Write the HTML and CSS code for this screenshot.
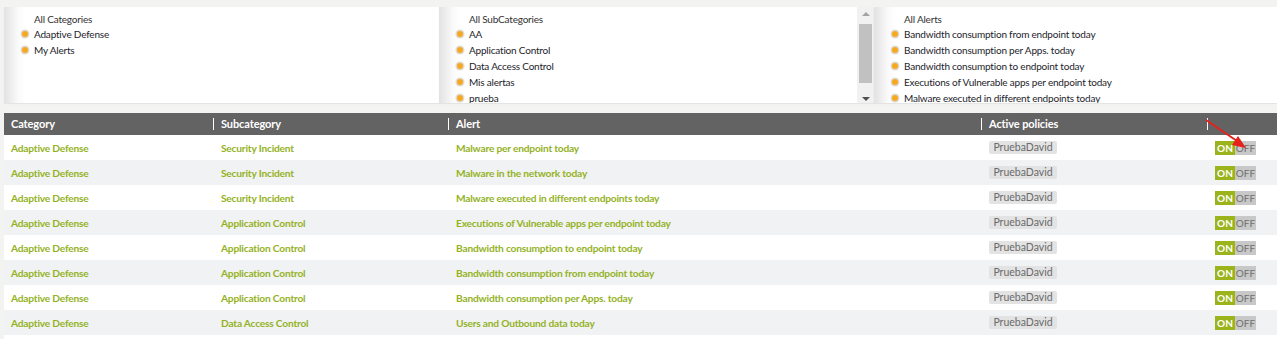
FILE: index.html
```html
<!DOCTYPE html>
<html lang="en">
<head>
    <meta charset="UTF-8">
    <link rel="stylesheet" href="styles.css">
    <title>Alerts</title>
</head>
<body>
    <div class="page">
        <div class="filters">
            <div class="filter">
                <div class="filter-list">
                    <div class="filter-head">All Categories</div>
                    <div class="filter-item"><span class="dot"></span>Adaptive Defense</div>
                    <div class="filter-item"><span class="dot"></span>My Alerts</div>
                </div>
            </div>
            <div class="filter">
                <div class="filter-list">
                    <div class="filter-head">All SubCategories</div>
                    <div class="filter-item"><span class="dot"></span>AA</div>
                    <div class="filter-item"><span class="dot"></span>Application Control</div>
                    <div class="filter-item"><span class="dot"></span>Data Access Control</div>
                    <div class="filter-item"><span class="dot"></span>Mis alertas</div>
                    <div class="filter-item"><span class="dot"></span>prueba</div>
                </div>
                <div class="scrollbar">
                    <span class="sb-up"></span>
                    <span class="sb-thumb"></span>
                    <span class="sb-down"></span>
                </div>
            </div>
            <div class="filter">
                <div class="filter-list">
                    <div class="filter-head">All Alerts</div>
                    <div class="filter-item"><span class="dot"></span>Bandwidth consumption from endpoint today</div>
                    <div class="filter-item"><span class="dot"></span>Bandwidth consumption per Apps. today</div>
                    <div class="filter-item"><span class="dot"></span>Bandwidth consumption to endpoint today</div>
                    <div class="filter-item"><span class="dot"></span>Executions of Vulnerable apps per endpoint today</div>
                    <div class="filter-item"><span class="dot"></span>Malware executed in different endpoints today</div>
                </div>
            </div>
        </div>

        <div class="table-wrap">
            <table class="alerts">
                <colgroup>
                    <col style="width: 209px">
                    <col style="width: 235px">
                    <col style="width: 533px">
                    <col style="width: 226px">
                    <col>
                </colgroup>
                <thead>
                    <tr>
                        <th><span class="first">Category</span></th>
                        <th><span>Subcategory</span></th>
                        <th><span>Alert</span></th>
                        <th><span>Active policies</span></th>
                        <th><span>&nbsp;</span></th>
                    </tr>
                </thead>
                <tbody>
                    <tr>
                        <td>Adaptive Defense</td><td>Security Incident</td><td>Malware per endpoint today</td>
                        <td><span class="policy">PruebaDavid</span></td>
                        <td><span class="toggle"><span class="on">ON</span><span class="off">OFF</span></span></td>
                    </tr>
                    <tr>
                        <td>Adaptive Defense</td><td>Security Incident</td><td>Malware in the network today</td>
                        <td><span class="policy">PruebaDavid</span></td>
                        <td><span class="toggle"><span class="on">ON</span><span class="off">OFF</span></span></td>
                    </tr>
                    <tr>
                        <td>Adaptive Defense</td><td>Security Incident</td><td>Malware executed in different endpoints today</td>
                        <td><span class="policy">PruebaDavid</span></td>
                        <td><span class="toggle"><span class="on">ON</span><span class="off">OFF</span></span></td>
                    </tr>
                    <tr>
                        <td>Adaptive Defense</td><td>Application Control</td><td>Executions of Vulnerable apps per endpoint today</td>
                        <td><span class="policy">PruebaDavid</span></td>
                        <td><span class="toggle"><span class="on">ON</span><span class="off">OFF</span></span></td>
                    </tr>
                    <tr>
                        <td>Adaptive Defense</td><td>Application Control</td><td>Bandwidth consumption to endpoint today</td>
                        <td><span class="policy">PruebaDavid</span></td>
                        <td><span class="toggle"><span class="on">ON</span><span class="off">OFF</span></span></td>
                    </tr>
                    <tr>
                        <td>Adaptive Defense</td><td>Application Control</td><td>Bandwidth consumption from endpoint today</td>
                        <td><span class="policy">PruebaDavid</span></td>
                        <td><span class="toggle"><span class="on">ON</span><span class="off">OFF</span></span></td>
                    </tr>
                    <tr>
                        <td>Adaptive Defense</td><td>Application Control</td><td>Bandwidth consumption per Apps. today</td>
                        <td><span class="policy">PruebaDavid</span></td>
                        <td><span class="toggle"><span class="on">ON</span><span class="off">OFF</span></span></td>
                    </tr>
                    <tr>
                        <td>Adaptive Defense</td><td>Data Access Control</td><td>Users and Outbound data today</td>
                        <td><span class="policy">PruebaDavid</span></td>
                        <td><span class="toggle"><span class="on">ON</span><span class="off">OFF</span></span></td>
                    </tr>
                    <tr>
                        <td>&nbsp;</td><td></td><td></td><td></td><td></td>
                    </tr>
                </tbody>
            </table>

            <svg class="pointer" width="50" height="36" viewBox="0 0 50 36">
                <line x1="4" y1="2" x2="35" y2="23" stroke="#e8201c" stroke-width="2"/>
                <polygon points="44,30 30,27 36,18" fill="#e8201c"/>
            </svg>
        </div>
    </div>
</body>
</html>
```

FILE: styles.css
```css
body {
    margin: 0;
    background: #f3f3f2;
    font-family: Lato, "Open Sans", sans-serif;
    overflow: hidden;
}

.page {
    padding: 7px 0 0 4px;
}

.filters {
    display: grid;
    grid-template-columns: 435px 435px 1fr;
    height: 96px;
}

.filter {
    display: flex;
    overflow: hidden;
    background: linear-gradient(to right, #e2e2e2, #fafafa 14px, #fff 22px);
    box-shadow: 0 1px 1px rgba(0, 0, 0, 0.06);
}

.filter-list {
    flex: 1;
    padding-top: 5px;
    font-size: 10px;
    letter-spacing: -0.2px;
    color: #1d1d2b;
}

.filter-head {
    padding-left: 30px;
    line-height: 14px;
    color: #333;
}

.filter-item {
    display: flex;
    align-items: center;
    height: 16px;
    padding-left: 18px;
}

.dot {
    flex: none;
    width: 6px;
    height: 6px;
    margin-right: 6px;
    border-radius: 50%;
    background: #f7a823;
    box-shadow: 0 0 0 1.5px #dedad2;
}

.scrollbar {
    width: 17px;
    display: flex;
    flex-direction: column;
    align-items: center;
    background: #f1f1f1;
}

.sb-up,
.sb-down {
    width: 0;
    height: 0;
    border-left: 4px solid transparent;
    border-right: 4px solid transparent;
}

.sb-up {
    margin-top: 5px;
    border-bottom: 4px solid #a3a3a3;
}

.sb-thumb {
    width: 13px;
    height: 59px;
    margin: 8px 0 14px;
    background: #c1c1c1;
}

.sb-down {
    border-top: 4px solid #505050;
}

.table-wrap {
    position: relative;
    margin-top: 10px;
}

.alerts {
    width: 100%;
    border-collapse: collapse;
    table-layout: fixed;
    font-size: 11px;
}

.alerts th {
    height: 22px;
    padding: 0;
    background: #636363;
    color: #fff;
    font-weight: 700;
    text-align: left;
    white-space: nowrap;
    letter-spacing: -0.1px;
}

.alerts th span {
    display: block;
    border-left: 1px solid #fff;
    padding-left: 7px;
    line-height: 12px;
}

.alerts th span.first {
    border-left: none;
}

.alerts td {
    height: 25px;
    padding: 0 0 0 8px;
    color: #94b21f;
    font-size: 10.2px;
    font-weight: 700;
    letter-spacing: -0.2px;
    white-space: nowrap;
    overflow: hidden;
}

.alerts td:first-child {
    padding-left: 7px;
}

.alerts tbody tr:nth-child(odd) {
    background: #fff;
}

.alerts tbody tr:nth-child(even) {
    background: #f1f2f4;
}

.policy {
    display: inline-block;
    width: 68px;
    height: 13px;
    line-height: 13px;
    border-radius: 2px;
    background: #e3e3e3;
    color: #6a6a6a;
    font-size: 10.5px;
    font-weight: 400;
    letter-spacing: 0;
    text-align: center;
    vertical-align: middle;
}

.toggle {
    display: inline-flex;
    height: 14px;
    line-height: 14px;
    font-size: 10px;
    letter-spacing: 0;
    vertical-align: middle;
}

.toggle .on {
    width: 20px;
    background: #9bb41c;
    color: #fff;
    text-align: center;
}

.toggle .off {
    width: 21px;
    background: #c8c8c8;
    color: #6f6f6f;
    font-weight: 400;
    text-align: center;
}

.pointer {
    position: absolute;
    top: 5px;
    left: 1198px;
}
```
